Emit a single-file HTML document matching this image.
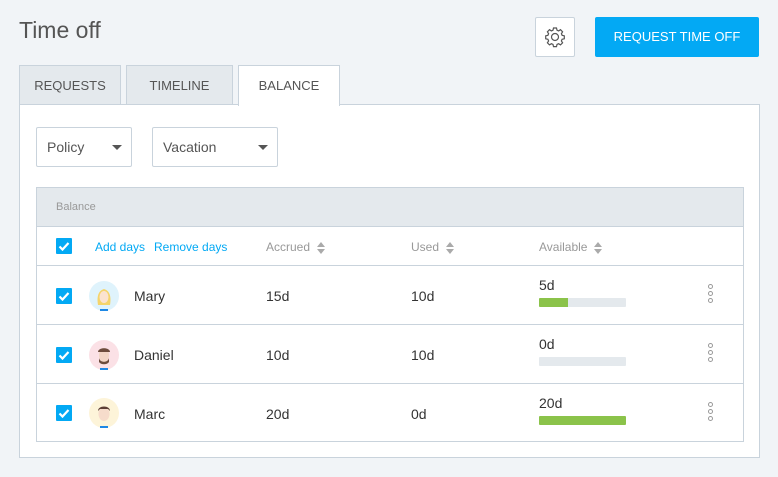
<!DOCTYPE html>
<html><head><style>
*{box-sizing:border-box;margin:0;padding:0}
body{width:778px;height:477px;background:#f1f4f7;font-family:"Liberation Sans",sans-serif;position:relative;overflow:hidden;color:#333}
.a{position:absolute}
h1{position:absolute;left:19px;top:17px;font-size:23px;font-weight:normal;color:#555}
.gear{left:535px;top:17px;width:40px;height:40px;background:#fff;border:1px solid #c9d3dc;border-radius:2px}
.btn{left:595px;top:17px;width:164px;height:40px;background:#03a9f4;border-radius:2px;color:#fff;font-size:13px;text-align:center;line-height:40px}
.tab{top:65px;height:40px;background:#e4e9ed;border:1px solid #c9d3dc;border-bottom:none;font-size:13px;color:#555;text-align:center;line-height:39px}
.panel{left:19px;top:104px;width:741px;height:354px;background:#fff;border:1px solid #c9d3dc}
.dd{top:127px;height:40px;border:1px solid #c9d3dc;border-radius:2px;font-size:14px;color:#555;line-height:38px;padding-left:10px}
.dd:after{content:"";position:absolute;right:9px;top:17px;border-left:5px solid transparent;border-right:5px solid transparent;border-top:5px solid #555}
.tbl{left:36px;top:187px;width:708px;height:255px;border:1px solid #c9d3dc}
.hd{left:0;top:0;width:706px;height:39px;background:#e4e9ed;border-bottom:1px solid #c9d3dc;font-size:11px;color:#999;padding:13px 0 0 19px}
.row{left:0;width:706px;border-bottom:1px solid #c9d3dc}
.cb{width:16px;height:16px;background:#03a9f4;border-radius:1px}
.cb svg{display:block}
.sm{font-size:12px;color:#999}
.lk{font-size:12px;color:#03a9f4}
.sort{display:inline-block;vertical-align:middle;margin-left:6px}
.av{width:30px;height:30px;border-radius:50%}
.t{font-size:14px;color:#333}
.bar{width:87px;height:9px;background:#e4e9ed;border-radius:1px;overflow:hidden}
.bar i{display:block;height:9px;background:#8bc34a}
.dots{width:6px}
.dots b{display:block;width:5px;height:5px;border:1px solid #999;border-radius:50%;margin-bottom:2px}
</style></head><body>
<h1>Time off</h1>
<div class="a gear"><svg width="38" height="38" viewBox="0 0 38 38"><g fill="none" stroke="#555" stroke-width="1.2"><circle cx="19" cy="19" r="3.5"/><path d="M17.5 10h3l.5 2.2 1.6.7 1.9-1.2 2.1 2.1-1.2 1.9.7 1.6 2.2.5v3l-2.2.5-.7 1.6 1.2 1.9-2.1 2.1-1.9-1.2-1.6.7-.5 2.2h-3l-.5-2.2-1.6-.7-1.9 1.2-2.1-2.1 1.2-1.9-.7-1.6-2.2-.5v-3l2.2-.5.7-1.6-1.2-1.9 2.1-2.1 1.9 1.2 1.6-.7z"/></g></svg></div>
<div class="a btn">REQUEST TIME OFF</div>
<div class="a tab" style="left:19px;width:102px">REQUESTS</div>
<div class="a tab" style="left:126px;width:107px">TIMELINE</div>
<div class="a panel"></div>
<div class="a tab" style="left:238px;width:102px;height:41px;background:#fff">BALANCE</div>
<div class="a dd" style="left:36px;width:96px">Policy</div>
<div class="a dd" style="left:152px;width:126px">Vacation</div>
<div class="a tbl">
 <div class="a hd">Balance</div>
 <div class="a row" style="top:39px;height:39px">
  <div class="a cb" style="left:19px;top:11px"><svg width="16" height="16"><path d="M3.5 8.5l3 3 6-6.5" stroke="#fff" stroke-width="2.2" fill="none"/></svg></div>
  <div class="a lk" style="left:58px;top:13px">Add days</div>
  <div class="a lk" style="left:117px;top:13px">Remove days</div>
  <div class="a sm" style="left:229px;top:13px">Accrued<svg class="sort" width="10" height="14"><path d="M5 1l4 5H1zM5 13l4-5H1z" fill="#aaa"/></svg></div>
  <div class="a sm" style="left:374px;top:13px">Used<svg class="sort" width="10" height="14"><path d="M5 1l4 5H1zM5 13l4-5H1z" fill="#aaa"/></svg></div>
  <div class="a sm" style="left:502px;top:13px">Available<svg class="sort" width="10" height="14"><path d="M5 1l4 5H1zM5 13l4-5H1z" fill="#aaa"/></svg></div>
 </div>
 <div class="a row" style="top:78px;height:59px">
  <div class="a cb" style="left:19px;top:22px"><svg width="16" height="16"><path d="M3.5 8.5l3 3 6-6.5" stroke="#fff" stroke-width="2.2" fill="none"/></svg></div>
  <div class="a av" style="left:52px;top:15px;background:#dff3fc"><svg width="30" height="30"><path d="M9 24c-1-6-1-14 6-16 7 2 7 10 6 16z" fill="#f5d46a"/><ellipse cx="15" cy="16" rx="4.5" ry="6" fill="#fbe3d0"/><path d="M11 28h8v2h-8z" fill="#1e88e5"/></svg></div>
  <div class="a t" style="left:97px;top:22px">Mary</div>
  <div class="a t" style="left:229px;top:22px">15d</div>
  <div class="a t" style="left:374px;top:22px">10d</div>
  <div class="a t" style="left:502px;top:11px">5d</div>
  <div class="a bar" style="left:502px;top:32px"><i style="width:29px"></i></div>
  <div class="a dots" style="left:671px;top:18px"><b></b><b></b><b></b></div>
 </div>
 <div class="a row" style="top:137px;height:59px">
  <div class="a cb" style="left:19px;top:22px"><svg width="16" height="16"><path d="M3.5 8.5l3 3 6-6.5" stroke="#fff" stroke-width="2.2" fill="none"/></svg></div>
  <div class="a av" style="left:52px;top:15px;background:#fbe1e6"><svg width="30" height="30"><ellipse cx="15" cy="15" rx="5" ry="7" fill="#f3d6c6"/><path d="M9 12c0-5 12-5 12 0z" fill="#6d4c3d"/><path d="M10 18c1 5 9 5 10 0v4c-2 3-8 3-10 0z" fill="#6d4c3d"/><path d="M11 28h8v2h-8z" fill="#1e88e5"/></svg></div>
  <div class="a t" style="left:97px;top:22px">Daniel</div>
  <div class="a t" style="left:229px;top:22px">10d</div>
  <div class="a t" style="left:374px;top:22px">10d</div>
  <div class="a t" style="left:502px;top:11px">0d</div>
  <div class="a bar" style="left:502px;top:32px"></div>
  <div class="a dots" style="left:671px;top:18px"><b></b><b></b><b></b></div>
 </div>
 <div class="a row" style="top:196px;height:58px;border-bottom:none">
  <div class="a cb" style="left:19px;top:21px"><svg width="16" height="16"><path d="M3.5 8.5l3 3 6-6.5" stroke="#fff" stroke-width="2.2" fill="none"/></svg></div>
  <div class="a av" style="left:52px;top:14px;background:#fdf4d9"><svg width="30" height="30"><ellipse cx="15" cy="16" rx="5.5" ry="7" fill="#f6dccb"/><path d="M9 13c0-6 12-6 12 0l-2-2h-8z" fill="#5d4037"/><path d="M11 28h8v2h-8z" fill="#1e88e5"/></svg></div>
  <div class="a t" style="left:97px;top:22px">Marc</div>
  <div class="a t" style="left:229px;top:22px">20d</div>
  <div class="a t" style="left:374px;top:22px">0d</div>
  <div class="a t" style="left:502px;top:11px">20d</div>
  <div class="a bar" style="left:502px;top:32px"><i style="width:87px"></i></div>
  <div class="a dots" style="left:671px;top:18px"><b></b><b></b><b></b></div>
 </div>
</div>
</body></html>
